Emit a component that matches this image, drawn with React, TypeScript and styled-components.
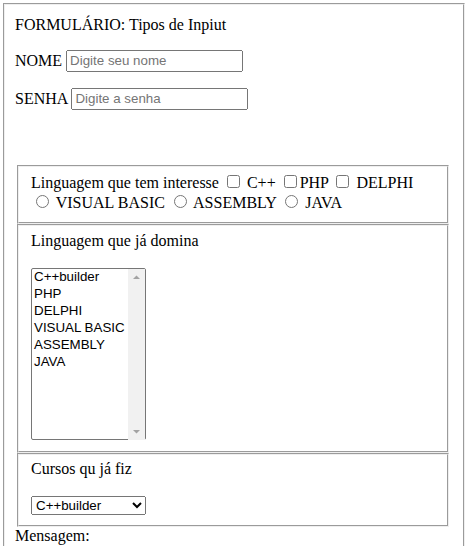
import React from 'react';
import styled, { createGlobalStyle } from 'styled-components';

const Global = createGlobalStyle`
  html, body { margin: 0; padding: 0; background: #fff; overflow: hidden; }
  body {
    font-family: "Liberation Serif", "Times New Roman", serif;
    font-size: 16px;
    color: #000;
  }
`;

const Frame = styled.form`
  box-sizing: border-box;
  margin: 3px 0 0 3px;
  width: 462px;
  min-height: 600px;
  border: 2px groove ThreeDFace;
  padding: 10.5px 12px 0 10px;
`;

const Line = styled.p`
  margin: 0 0 16px;
`;

const TextField = styled.input`
  box-sizing: border-box;
  width: 177px;
  height: 22px;
  font-family: "Liberation Sans", Arial, sans-serif;
  font-size: 13.33px;
  padding: 1px 2px;
  vertical-align: baseline;
  &::placeholder { color: #757575; }
`;

const Groups = styled.div`
  margin-top: 55px;
`;

const Group = styled.fieldset`
  margin: 0 2px;
  padding: 0.35em 0.75em 0.625em;
  border: 2px groove ThreeDFace;
  min-inline-size: min-content;
`;

const Check = styled.input.attrs({ type: 'checkbox' })`
  margin: 3px 3px 3px 4px;
`;

const Radio = styled.input.attrs({ type: 'radio' })`
  margin: 3px 3px 0 5px;
`;

const ListWrap = styled.span`
  position: relative;
  display: inline-block;
`;

const ListBox = styled.select`
  box-sizing: border-box;
  width: 115px;
  height: 172px;
  font-family: "Liberation Sans", Arial, sans-serif;
  font-size: 13.33px;
  border: 1px solid #767676;
  border-radius: 2px;
  padding: 0 17px 0 0;
  margin: 0;
`;

const ScrollTrack = styled.span`
  position: absolute;
  top: 1px;
  bottom: 1px;
  right: 1px;
  width: 17px;
  background: #f1f1f1;
  pointer-events: none;
  display: flex;
  flex-direction: column;
  justify-content: space-between;
`;

const Arrow = styled.svg`
  display: block;
  width: 17px;
  height: 17px;
`;

const DropDown = styled.select`
  box-sizing: border-box;
  width: 115px;
  height: 19px;
  font-family: "Liberation Sans", Arial, sans-serif;
  font-size: 13.33px;
`;

const Message = styled.div`
  margin: 0;
`;

const langs = ['C++builder', 'PHP', 'DELPHI', 'VISUAL BASIC', 'ASSEMBLY', 'JAVA'];

export default function App() {
  return (
    <>
      <Global />
      <Frame onSubmit={(e) => e.preventDefault()}>
        <Line>FORMULÁRIO: Tipos de Inpiut</Line>
        <Line>
          NOME <TextField type="text" placeholder="Digite seu nome" />
        </Line>
        <Line>
          SENHA <TextField type="password" placeholder="Digite a senha" />
        </Line>
        <Groups>
          <Group>
            Linguagem que tem interesse <Check name="c1" /> C++ <Check name="c2" />PHP <Check name="c3" /> DELPHI
            <br />
            <Radio name="r" /> VISUAL BASIC <Radio name="r" /> ASSEMBLY <Radio name="r" /> JAVA
          </Group>
          <Group>
            Linguagem que já domina
            <br />
            <br />
            <ListWrap>
              <ListBox multiple size={10}>
                {langs.map((l) => (
                  <option key={l}>{l}</option>
                ))}
              </ListBox>
              <ScrollTrack aria-hidden="true">
                <Arrow viewBox="0 0 17 17">
                  <polygon points="5,10 12,10 8.5,6.5" fill="#a3a3a3" />
                </Arrow>
                <Arrow viewBox="0 0 17 17">
                  <polygon points="5,7 12,7 8.5,10.5" fill="#a3a3a3" />
                </Arrow>
              </ScrollTrack>
            </ListWrap>
          </Group>
          <Group>
            Cursos qu já fiz
            <br />
            <br />
            <DropDown defaultValue="C++builder">
              {langs.map((l) => (
                <option key={l}>{l}</option>
              ))}
            </DropDown>
          </Group>
        </Groups>
        <Message>Mensagem:</Message>
      </Frame>
    </>
  );
}
